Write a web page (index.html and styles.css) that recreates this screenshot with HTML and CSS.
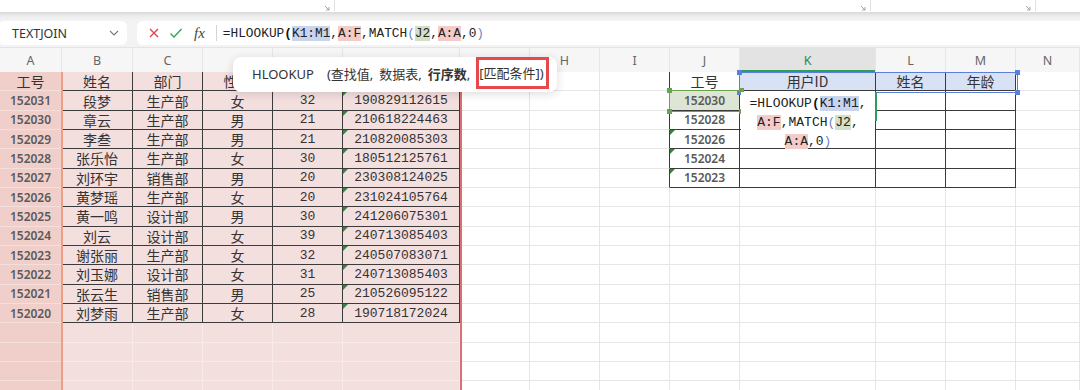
FILE: index.html
```html
<!DOCTYPE html>
<html lang="zh-CN">
<head>
    <meta charset="UTF-8">
    <title>HLOOKUP</title>
    <link rel="stylesheet" href="styles.css">
</head>
<body>
    <div class="ribbon">
        <div class="grp grp1"><svg width="6" height="6" viewBox="0 0 6 6"><path d="M1 1 L5 5 M5 2 V5 H2" stroke="#9a9a9a" fill="none" stroke-width="0.9"/></svg></div>
        <div class="grp grp2"><svg width="6" height="6" viewBox="0 0 6 6"><path d="M1 1 L5 5 M5 2 V5 H2" stroke="#9a9a9a" fill="none" stroke-width="0.9"/></svg></div>
        <div class="grp grp3"><svg width="6" height="6" viewBox="0 0 6 6"><path d="M1 1 L5 5 M5 2 V5 H2" stroke="#9a9a9a" fill="none" stroke-width="0.9"/></svg></div>
    </div>

    <div class="fbar">
        <div class="namebox">
            <span>TEXTJOIN</span>
            <svg width="10" height="6" viewBox="0 0 10 6"><path d="M1 1 L5 5 L9 1" stroke="#777" fill="none" stroke-width="1.1"/></svg>
        </div>
        <div class="fbox">
            <svg class="ico" width="12" height="12" viewBox="0 0 12 12"><path d="M2 2 L10 10 M10 2 L2 10" stroke="#e0484c" stroke-width="1.4"/></svg>
            <svg class="ico" width="14" height="12" viewBox="0 0 14 12"><path d="M1.5 6.5 L5 10 L12.5 2" stroke="#36a35c" fill="none" stroke-width="1.4"/></svg>
            <i class="fx">fx</i>
            <span class="sep"></span>
            <div class="ftext">=HLOOKUP<b class="p0">(</b><span class="rb">K1:M1</span>,<span class="rr">A:F</span>,MATCH<span class="p1">(</span><span class="rg">J2</span>,<span class="rr">A:A</span>,0<span class="p1">)</span></div>
        </div>
    </div>

    <!-- D to G letters sit under the function tip -->
    <div class="colhead">
        <div>A</div><div>B</div><div>C</div><div></div><div></div><div></div><div></div>
        <div>H</div><div>I</div><div>J</div><div class="on">K</div><div>L</div><div>M</div><div>N</div>
    </div>

    <div class="sheet-wrap">
        <div class="sheet" id="sheet"></div>

        <div class="sel sel-a"></div>
        <div class="sel sel-af"></div>
        <div class="sel sel-k"><i class="h tl"></i><i class="h tr"></i><i class="h bl"></i><i class="h br"></i></div>
        <div class="sel sel-j"><i class="h tl"></i><i class="h tr"></i><i class="h bl"></i><i class="h br"></i></div>

        <div class="editor">
            =HLOOKUP<b class="p0">(</b><span class="rb">K1:M1</span>,<br>
            <span class="rr">A:F</span>,MATCH<span class="p1">(</span><span class="rg">J2</span>,<br>
            <span class="rr">A:A</span>,0<span class="p1">)</span>
        </div>
    </div>

    <div class="tip">
        <span class="fn">HLOOKUP</span>
        <span class="arg">(查找值,</span>
        <span class="arg">数据表,</span>
        <span class="arg"><b>行序数</b>,</span>
        <span class="hint">[匹配条件])</span>
    </div>

    <script>
        // header cells for E and F are covered by the tip
        const left = [
            ['工号', '姓名', '部门', '性别', '', ''],
            ['152031', '段梦', '生产部', '女', '32', '190829112615'],
            ['152030', '章云', '生产部', '男', '21', '210618224463'],
            ['152029', '李叁', '生产部', '男', '21', '210820085303'],
            ['152028', '张乐怡', '生产部', '女', '30', '180512125761'],
            ['152027', '刘环宇', '销售部', '男', '20', '230308124025'],
            ['152026', '黄梦瑶', '生产部', '女', '20', '231024105764'],
            ['152025', '黄一鸣', '设计部', '男', '30', '241206075301'],
            ['152024', '刘云', '设计部', '女', '39', '240713085403'],
            ['152023', '谢张丽', '生产部', '女', '32', '240507083071'],
            ['152022', '刘玉娜', '设计部', '女', '31', '240713085403'],
            ['152021', '张云生', '销售部', '男', '25', '210526095122'],
            ['152020', '刘梦雨', '生产部', '女', '28', '190718172024']
        ];
        const right = [
            ['工号', '用户ID', '姓名', '年龄'],
            ['152030', '', '', ''],
            ['152028', '', '', ''],
            ['152026', '', '', ''],
            ['152024', '', '', ''],
            ['152023', '', '', '']
        ];

        const sheet = document.getElementById('sheet');

        for (let r = 0; r < 17; r++) {
            for (let c = 0; c < 14; c++) {
                const cell = document.createElement('div');
                cell.className = 'c';
                let text = '';

                if (c === 0) {
                    cell.classList.add('pa');
                    if (r < left.length) text = left[r][0];
                    if (r > 0) cell.classList.add('id');
                }
                if (c >= 1 && c <= 5) {
                    cell.classList.add('pb');
                    if (r < left.length) {
                        text = left[r][c];
                        cell.classList.add('tb');
                        if (r > 0 && c >= 4) cell.classList.add('mono');
                        if (r > 0 && c === 5) cell.classList.add('tri');
                    }
                }
                if (c === 8 && r < right.length) cell.classList.add('tl');
                if (c >= 9 && c <= 12 && r < right.length) {
                    text = right[r][c - 9];
                    cell.classList.add('tb');
                    if (c === 9 && r > 0) cell.classList.add('id');
                    if (c === 9 && r >= 3) cell.classList.add('tri');
                    if (c === 9 && r === 1) cell.classList.add('green');
                    if (c >= 10 && r === 0) cell.classList.add('blue');
                }

                cell.textContent = text;
                sheet.appendChild(cell);
            }
        }
    </script>
</body>
</html>
```

FILE: styles.css
```css
body {
    margin: 0;
    width: 1080px;
    height: 390px;
    overflow: hidden;
    background: #fff;
    font-family: "Noto Sans", "Noto Sans CJK SC", sans-serif;
    color: #333;
    position: relative;
}

/* ribbon strip */
.ribbon {
    height: 12px;
    display: flex;
    background: #fff;
}

.grp {
    height: 11px;
    box-sizing: border-box;
    border-right: 1px solid #e2e2e2;
    display: flex;
    justify-content: flex-end;
    align-items: flex-end;
    padding-right: 4px;
}

.grp1 { width: 335px; }
.grp2 { width: 536px; }
.grp3 { width: 165px; }

/* formula bar */
.fbar {
    height: 36px;
    box-sizing: border-box;
    padding-bottom: 2px;
    border-bottom: 1px solid #e4e4e4;
    background: linear-gradient(#d9d9d9, #ececec 4px, #f3f3f3 8px);
    display: flex;
    align-items: flex-end;
    gap: 10px;
}

.namebox {
    width: 129px;
    height: 24px;
    margin-left: -2px;
    box-sizing: border-box;
    padding: 0 8px 0 14px;
    background: #fff;
    border-radius: 6px;
    display: flex;
    align-items: center;
    justify-content: space-between;
    font-size: 12.5px;
    color: #333;
}

.fbox {
    flex: 1;
    height: 24px;
    margin-right: -10px;
    background: #fff;
    border-radius: 6px;
    display: flex;
    align-items: center;
    padding-left: 11px;
}

.fbox .ico {
    margin-right: 9px;
}

.fx {
    font-family: "Liberation Serif", serif;
    font-size: 15px;
    color: #444;
    margin-left: 2px;
    margin-right: 11px;
}

.sep {
    width: 1px;
    height: 16px;
    background: #d4d4d4;
    margin-right: 6px;
}

.ftext {
    font-family: "Liberation Mono", monospace;
    font-size: 12.8px;
    color: #222;
    white-space: nowrap;
}

.p0 {
    font-weight: bold;
    color: #111;
}

.p1 {
    color: #6f86c8;
}

.rb { background: #c9d4ee; }
.rr { background: #f3cbc8; }
.rg { background: #d4dfc8; }

/* column headers */
.colhead {
    display: grid;
    grid-template-columns: 62px 71px 70px 70px 70px 117px 70px 70px 70px 70px 136px 70px 70px 64px;
    height: 24px;
    background: #f6f6f6;
}

.colhead div {
    border-right: 1px solid #e6e6e6;
    display: flex;
    align-items: center;
    justify-content: center;
    font-size: 12.5px;
    color: #666;
}

.colhead .on {
    background: #e3e3e3;
    color: #1f8a4c;
    box-shadow: inset 0 -2px #2e9c5c;
}

/* cells */
.sheet-wrap {
    position: relative;
}

.sheet {
    display: grid;
    grid-template-columns: 62px 71px 70px 70px 70px 117px 70px 70px 70px 70px 136px 70px 70px 64px;
    grid-auto-rows: 19.33px;
}

.c {
    position: relative;
    box-sizing: border-box;
    border-right: 1px solid #e6e6e6;
    border-bottom: 1px solid #e6e6e6;
    display: flex;
    align-items: center;
    justify-content: center;
    font-family: "Noto Sans CJK SC", sans-serif;
    font-size: 14px;
    color: #333;
    white-space: nowrap;
    overflow: hidden;
}

.pa {
    background: #f0cfca;
    border-color: #f5dfdc;
}

.pb {
    background: #f4dfdf;
    border-color: #f8eaea;
}

.tb {
    border-right-color: #3b3b3b;
    border-bottom-color: #3b3b3b;
}

.tl {
    border-right-color: #3b3b3b;
}

.id {
    font-family: "Noto Sans", sans-serif;
    font-weight: 600;
    font-size: 12px;
    color: #5a5a5a;
}

.mono {
    font-family: "Liberation Mono", monospace;
    font-size: 13px;
    color: #333;
}

.blue { background: #d9e1f4; }
.green { background: #dde5d4; }

.tri::before {
    content: '';
    position: absolute;
    left: 0;
    top: 0;
    border-top: 5px solid #2e8a3a;
    border-right: 5px solid transparent;
}

/* range outlines */
.sel {
    position: absolute;
    box-sizing: border-box;
    pointer-events: none;
}

.sel-a {
    left: 0;
    top: 0;
    bottom: 0;
    width: 63px;
    border-right: 2px solid #ee9e86;
}

.sel-af {
    left: 0;
    top: 0;
    bottom: 0;
    width: 462px;
    border-right: 2px solid #dc6f6f;
}

.sel-k {
    left: 739px;
    top: 0;
    width: 279px;
    height: 21px;
    border: 1.5px solid #5b80dc;
}

.sel-j {
    left: 669px;
    top: 18px;
    width: 73px;
    height: 22px;
    border: 1.5px solid #6ba250;
}

.h {
    position: absolute;
    width: 5px;
    height: 5px;
}

.sel-k .h { background: #5b80dc; }
.sel-j .h { background: #6ba250; }

.h.tl { left: -3px; top: -3px; }
.h.tr { right: -3px; top: -3px; }
.h.bl { left: -3px; bottom: -3px; }
.h.br { right: -3px; bottom: -3px; }

/* in-cell editor */
.editor {
    position: absolute;
    left: 741px;
    top: 20px;
    width: 134px;
    height: 56px;
    background: #fff;
    padding-top: 2px;
    box-sizing: border-box;
    font-family: "Liberation Mono", monospace;
    font-size: 13px;
    line-height: 19px;
    text-align: center;
    color: #222;
    white-space: nowrap;
}

.editor::after {
    content: '';
    position: absolute;
    right: -2px;
    top: 0;
    width: 2px;
    height: 29px;
    background: #2e9c5c;
}

/* function tooltip */
.tip {
    position: absolute;
    left: 233px;
    top: 57px;
    width: 324px;
    height: 35px;
    box-sizing: border-box;
    padding-left: 19px;
    background: #fff;
    border-radius: 8px;
    box-shadow: 0 2px 10px rgba(0, 0, 0, 0.14);
    display: flex;
    align-items: flex-start;
    font-size: 13px;
    color: #333;
    white-space: nowrap;
}

.tip .fn {
    line-height: 35px;
    margin-right: 13px;
}

.tip .arg {
    line-height: 35px;
    margin-right: 6px;
}

.tip b {
    font-weight: bold;
}

.hint {
    line-height: 26px;
    padding: 0 2px 0 0;
    border: 3px solid #e5484d;
}
```
